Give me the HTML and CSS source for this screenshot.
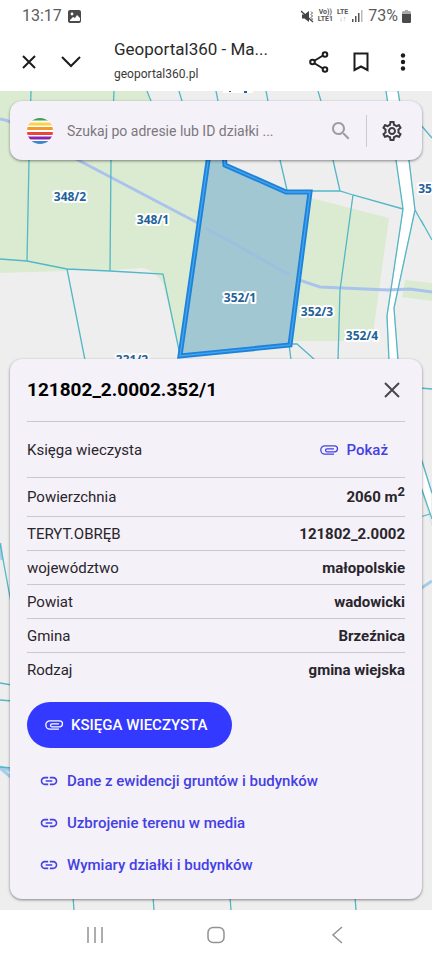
FILE: index.html
```html
<!DOCTYPE html>
<html lang="pl">
<head>
<meta charset="utf-8">
<meta name="viewport" content="width=device-width, initial-scale=1">
<title>Geoportal360 - Mapa</title>
<link rel="stylesheet" href="styles.css">
</head>
<body>
<svg class="sprite" aria-hidden="true">
  <symbol id="clip" viewBox="0 0 20 20"><path d="M15 14.200H6a4.200 4.200 0 0 1 0-8.400H15.500a3 3 0 0 1 0 6H8a1.400 1.400 0 0 1 0-2.900H15" fill="none" stroke="currentColor" stroke-width="1.300"/></symbol>
  <symbol id="link" viewBox="0 0 24 24"><path d="M3.900 12c0-1.710 1.390-3.100 3.100-3.100h4V7H7c-2.760 0-5 2.240-5 5s2.240 5 5 5h4v-1.900H7c-1.710 0-3.100-1.390-3.100-3.100zM8 13h8v-2H8v2zm9-6h-4v1.900h4c1.710 0 3.100 1.390 3.100 3.100s-1.390 3.100-3.100 3.100h-4V17h4c2.760 0 5-2.240 5-5s-2.240-5-5-5z"/></symbol>
</svg>

<div class="status">
  <div class="status-group">
    <span class="status-text">13:17</span>
    <svg width="13" height="13" viewBox="0 0 13 13"><rect width="13" height="13" rx="2" fill="#4a4a4a"/><path d="M2 10l3-3 2 1 2-3 3 3v2a1 1 0 0 1-1 1H2z" fill="#fff"/><circle cx="4" cy="4" r="1.4" fill="#fff"/></svg>
  </div>
  <div class="status-group status-right">
    <svg width="13" height="13" viewBox="0 0 13 13"><path d="M1 4.500h2.500L8 1v11L3.500 8.500H1z" fill="#444"/><path d="M0 1l12 11" stroke="#444" stroke-width="1.300"/><path d="M10 1.500l1.500 1.500-1.500 1.500 1.500 1.500-1.500 1.500 1.500 1.500-1.500 2" stroke="#555" fill="none"/></svg>
    <span class="net">Vo))<br>LTE1</span>
    <span class="net">LTE<br><i>↓↑</i></span>
    <svg width="12" height="12" viewBox="0 0 12 12" fill="#555"><path d="M0 9h1.500v3H0zM3 6h1.500v6H3zM6 3h1.500v9H6z"/><path d="M9 0h1.500v12H9z" fill="#bbb"/></svg>
    <span class="status-text">73%</span>
    <svg width="9" height="13" viewBox="0 0 9 13"><path d="M3 0h3v1h2l1 1v10l-1 1H1l-1-1V2l1-1h2z" fill="#aaa"/><path d="M0 4h9v8l-1 1H1l-1-1z" fill="#4a4a4a"/></svg>
  </div>
</div>

<header class="browser">
  <button class="icon-btn" aria-label="Zamknij kartę"><svg width="16" height="16" viewBox="0 0 16 16"><path d="M2 2l12 12M14 2L2 14"/></svg></button>
  <button class="icon-btn" aria-label="Zwiń"><svg width="20" height="12" viewBox="0 0 20 12"><path d="M1 1l9 9 9-9"/></svg></button>
  <div class="page-id">
    <div class="page-title">Geoportal360 - Ma...</div>
    <div class="page-url">geoportal360.pl</div>
  </div>
  <button class="icon-btn" aria-label="Udostępnij"><svg width="20" height="22" viewBox="0 0 20 22"><path d="M14 4.500L5 10M14 17.500L5 12"/><circle cx="3.500" cy="11" r="2.300"/><circle cx="16" cy="3.500" r="2.300"/><circle cx="16" cy="18.500" r="2.300"/></svg></button>
  <button class="icon-btn" aria-label="Zakładka"><svg width="16" height="20" viewBox="0 0 16 20"><path d="M1.500 1.500h13v16.500l-6.500-3.500-6.500 3.500z"/></svg></button>
  <button class="icon-btn" aria-label="Menu"><svg class="dots" width="6" height="18" viewBox="0 0 6 18"><circle cx="3" cy="2.500" r="2.200"/><circle cx="3" cy="9" r="2.200"/><circle cx="3" cy="15.500" r="2.200"/></svg></button>
</header>

<main class="map-view">
  <svg class="map" viewBox="0 91 432 819" preserveAspectRatio="xMidYMin slice" role="img" aria-label="Mapa działek">
    <g class="forest">
      <path d="M0 91H147L151 101 216 130V155L181 356 163 284Q155 270 143 268L110 270 67 269V271L0 273z"/>
      <path d="M311 198L389 218 372 341H290z"/>
      <path d="M405 280L432 283V301L402 297z"/>
    </g>
    <path class="road" d="M386 91H398L409 160 415 210 394 308 398 358V370H389L387 316 403 209z"/>
    <path class="road" d="M418 445L432 495V525L418 478z"/>
    <path class="river" d="M0 119Q8 120 16 125L78 160 196 222 290 277 320 287 388 290 410 289 432 292"/>
    <path class="stream" d="M0 767L12 771M0 768L12 778M420 589L432 581M0 543L2 560"/>
    <g class="border">
      <path d="M31 91L29 160 27 261M114 91L111 160 110 271M147 91L151 101M179 91L182 101M216 91L218 101M266 91L268 101M318 91L321 101"/>
      <path d="M0 259L27 261 67 269 110 271 163 274 180 355M67 269L85 360"/>
      <path d="M280 160L287 190M333 160L340 191M310 191H340L353 195 403 209M353 195L340 290 338 360M289 344H297L315 360M289 344L291 360"/>
      <path d="M386 91L396 160 403 209 387 316 389 360M398 91L409 160 415 210 394 308 398 360M415 210L424 226M421 220L432 240M420 124L432 138"/>
      <path d="M0 543L12 608M0 683L12 685M0 700L12 701M0 767L12 768M420 388L432 389M420 455L432 493M420 484L432 519M420 517L430 514"/>
      <path d="M73 897L74 910M153 897L154 910M230 897L231 910M355 897L356 910"/>
    </g>
    <path class="parcel" d="M211 140L180 356 290 345 310 192H286L225 165 223 140z"/>
    <path class="parcel-river" d="M206 228L290 275"/>
    <path class="parcel-core" d="M211 140L180 356 290 345 310 192H286L225 165 223 140z"/>
    <path d="M223 91h30v2h-30z" fill="#fff"/><path d="M229 91h2v1h-2zM244 91h3v2h-3z" fill="#1f6299"/>
    <g class="label">
      <text x="70" y="201">348/2</text>
      <text x="153" y="224">348/1</text>
      <text x="240" y="302">352/1</text>
      <text x="317" y="316">352/3</text>
      <text x="362" y="340">352/4</text>
      <text x="132" y="364">331/2</text>
      <text x="425" y="193">35</text>
    </g>
  </svg>

  <form class="search card">
    <svg width="26" height="26" viewBox="0 0 26 26" aria-hidden="true">
      <clipPath id="disc"><circle cx="13" cy="13" r="13"/></clipPath>
      <g clip-path="url(#disc)"><path fill="#fff" d="M0 0h26v26H0z"/><path fill="#3f9f4a" d="M0 0h26v2.500H0z"/><path fill="#fbd24a" d="M0 4.500h26v3H0z"/><path fill="#f39a2d" d="M0 9h26v3H0z"/><path fill="#e8473f" d="M0 14h26v3H0z"/><path fill="#8e24aa" d="M0 18.500h26v3H0z"/><path fill="#3d87cf" d="M0 23h26v3H0z"/></g>
    </svg>
    <input type="text" aria-label="Szukaj" placeholder="Szukaj po adresie lub ID działki ...">
    <button class="icon-btn muted" type="button" aria-label="Szukaj"><svg width="24" height="24" viewBox="0 0 24 24"><path d="M15.500 14h-.79l-.28-.27C15.410 12.590 16 11.110 16 9.500 16 5.910 13.090 3 9.500 3S3 5.910 3 9.500 5.910 16 9.500 16c1.610 0 3.090-.59 4.230-1.570l.27.28v.79l5 4.990L20.490 19l-4.990-5zm-6 0C7.010 14 5 11.990 5 9.500S7.010 5 9.500 5 14 7.010 14 9.500 11.990 14 9.500 14z"/></svg></button>
    <span class="divider"></span>
    <button class="icon-btn gear" type="button" aria-label="Ustawienia"><svg width="24" height="24" viewBox="0 0 24 24"><path d="M19.43 12.98c.04-.32.07-.64.07-.98 0-.34-.03-.66-.07-.98l2.11-1.65c.19-.15.24-.42.12-.64l-2-3.46c-.09-.16-.26-.25-.44-.25-.06 0-.12.01-.17.03l-2.49 1c-.52-.4-1.08-.73-1.69-.98l-.38-2.65C14.46 2.18 14.25 2 14 2h-4c-.25 0-.46.18-.49.42l-.38 2.65c-.61.25-1.17.59-1.69.98l-2.49-1c-.06-.02-.12-.03-.18-.03-.17 0-.34.09-.43.25l-2 3.46c-.13.22-.07.49.12.64l2.11 1.65c-.04.32-.07.65-.07.98 0 .33.03.66.07.98l-2.11 1.65c-.19.15-.24.42-.12.64l2 3.46c.09.16.26.25.44.25.06 0 .12-.01.17-.03l2.49-1c.52.4 1.08.73 1.69.98l.38 2.65c.03.24.24.42.49.42h4c.25 0 .46-.18.49-.42l.38-2.65c.61-.25 1.17-.59 1.69-.98l2.49 1c.06.02.12.03.18.03.17 0 .34-.09.43-.25l2-3.46c.12-.22.07-.49-.12-.64l-2.11-1.65zm-1.98-1.71c.04.31.05.52.05.73 0 .21-.02.43-.05.73l-.14 1.13.89.7 1.08.84-.7 1.21-1.27-.51-1.04-.42-.9.68c-.43.32-.84.56-1.25.73l-1.06.43-.16 1.13-.2 1.35h-1.4l-.19-1.35-.16-1.13-1.06-.43c-.43-.18-.83-.41-1.23-.71l-.91-.7-1.06.43-1.27.51-.7-1.21 1.08-.84.89-.7-.14-1.13c-.03-.31-.05-.54-.05-.74s.02-.43.05-.73l.14-1.13-.89-.7-1.08-.84.7-1.21 1.27.51 1.04.42.9-.68c.43-.32.84-.56 1.25-.73l1.06-.43.16-1.13.2-1.35h1.39l.19 1.35.16 1.13 1.06.43c.43.18.83.41 1.23.71l.91.7 1.06-.43 1.27-.51.7 1.21-1.07.85-.89.7.14 1.13zM12 8c-2.21 0-4 1.79-4 4s1.79 4 4 4 4-1.79 4-4-1.79-4-4-4zm0 6c-1.1 0-2-.9-2-2s.9-2 2-2 2 .9 2 2-.9 2-2 2z"/></svg></button>
  </form>

  <section class="details card">
    <div class="details-head">
      <h1>121802_2.0002.352/1</h1>
      <button class="icon-btn close" aria-label="Zamknij"><svg width="16" height="16" viewBox="0 0 16 16"><path d="M1 1l14 14M15 1L1 15"/></svg></button>
    </div>
    <table>
      <tbody>
        <tr class="tall"><th scope="row">Księga wieczysta</th><td><button class="show"><svg width="20" height="20"><use href="#clip"/></svg>Pokaż</button></td></tr>
        <tr class="medium"><th scope="row">Powierzchnia</th><td>2060 m<sup>2</sup></td></tr>
        <tr><th scope="row">TERYT.OBRĘB</th><td>121802_2.0002</td></tr>
        <tr><th scope="row">województwo</th><td>małopolskie</td></tr>
        <tr><th scope="row">Powiat</th><td>wadowicki</td></tr>
        <tr><th scope="row">Gmina</th><td>Brzeźnica</td></tr>
        <tr><th scope="row">Rodzaj</th><td>gmina wiejska</td></tr>
      </tbody>
    </table>
    <button class="primary"><svg width="20" height="20"><use href="#clip"/></svg>KSIĘGA WIECZYSTA</button>
    <nav class="links">
      <a href="#"><svg width="20" height="20"><use href="#link"/></svg>Dane z ewidencji gruntów i budynków</a>
      <a href="#"><svg width="20" height="20"><use href="#link"/></svg>Uzbrojenie terenu w media</a>
      <a href="#"><svg width="20" height="20"><use href="#link"/></svg>Wymiary działki i budynków</a>
    </nav>
  </section>
</main>

<nav class="system" aria-label="Nawigacja systemowa">
  <button class="icon-btn" aria-label="Ostatnie"><svg width="18" height="18" viewBox="0 0 18 18"><path d="M2 1v16M9 1v16M16 1v16"/></svg></button>
  <button class="icon-btn" aria-label="Ekran główny"><svg width="18" height="18" viewBox="0 0 18 18"><rect x="1" y="1.500" width="16" height="15" rx="5"/></svg></button>
  <button class="icon-btn" aria-label="Wstecz"><svg width="18" height="18" viewBox="0 0 18 18"><path d="M14 1L5 9l9 8"/></svg></button>
</nav>
</body>
</html>
```
FILE: styles.css
```css
* { box-sizing: border-box; }

body {
  margin: 0;
  min-height: 100vh;
  display: flex;
  flex-direction: column;
  background: #fff;
  color: #29252c;
  font-family: Roboto, "Liberation Sans", sans-serif;
  font-size: 15px;
  line-height: 20px;
}

button {
  font: inherit;
  border: 0;
  background: none;
  padding: 0;
  color: inherit;
}

.sprite { position: absolute; width: 0; height: 0; }

svg { flex: none; display: block; }

.icon-btn {
  flex: none;
  display: grid;
  place-items: center;
  width: 42px;
  height: 42px;
}

/* Status bar */
.status {
  display: flex;
  justify-content: space-between;
  align-items: center;
  height: 32px;
  padding: 0 21px 0 22px;
}

.status-group { display: flex; align-items: center; gap: 6px; }
.status-right { gap: 4px; }
.status-text { font-size: 16px; color: #5c5c5c; }
.net { font-size: 7px; line-height: 7px; font-weight: 700; color: #555; text-align: center; }
.net i { color: #aaa; font-style: normal; }

/* Browser toolbar */
.browser {
  display: flex;
  align-items: center;
  height: 59px;
  padding: 0 8px;
}

.browser svg { fill: none; stroke: #1c1c1c; stroke-width: 2; }
.browser .dots { fill: #1c1c1c; stroke: none; }
.page-id { flex: 1; min-width: 0; padding-left: 22px; white-space: nowrap; }
.page-title { font-size: 17px; line-height: 24px; color: #2a2a2a; }
.page-url { font-size: 12px; line-height: 26px; color: #3a3a3a; }

/* Map */
.map-view {
  position: relative;
  flex: 1;
  display: flex;
  flex-direction: column;
  justify-content: space-between;
  gap: 199px;
  padding: 10px 10px 11px;
  background: #eee;
}

.map { position: absolute; inset: 0; width: 100%; height: 100%; }
.forest { fill: #dbebd2; }
.road { fill: #fff; stroke: #ddd; }
.river { fill: none; stroke: #a9c3ec; stroke-width: 3; }
.stream { fill: none; stroke: #a5cdea; stroke-width: 3; }
.border { fill: none; stroke: #53b7c6; stroke-width: 1.3; }
.parcel { fill: #a1c7d3; stroke: #1d82dc; stroke-width: 5; }
.parcel-river { stroke: #9cc0de; stroke-width: 3; }
.parcel-core { fill: none; stroke: #45a6ea; stroke-width: 1.3; }

.label {
  font: 700 12px "Noto Sans", sans-serif;
  fill: #1f6299;
  stroke: #fff;
  stroke-width: 4;
  stroke-linejoin: round;
  paint-order: stroke;
  text-anchor: middle;
}

.card {
  position: relative;
  background: #f5f1f8;
  border-radius: 12px;
  box-shadow: 0 1px 3px rgba(0, 0, 0, 0.45);
}

/* Search */
.search {
  display: flex;
  align-items: center;
  height: 59px;
  padding: 0 9px 0 17px;
}

.search input {
  flex: 1;
  min-width: 0;
  margin-left: 14px;
  padding: 0;
  border: 0;
  background: none;
  font: inherit;
  font-size: 14px;
  color: #29252c;
}

.search input::placeholder { color: #7b787e; opacity: 1; }
.divider { width: 1px; height: 32px; margin: 0 4px; background: #cdc9d0; }
.muted { fill: #9f9ca2; }
.gear { fill: #3f3c43; }

/* Parcel details */
.details { padding: 0 17px 13px; }

.details-head {
  display: flex;
  align-items: center;
  justify-content: space-between;
  height: 62px;
}

h1 { margin: 0; font-size: 19px; line-height: 24px; font-weight: 700; color: #000; }
.close { margin-right: -8px; }
.close svg { fill: none; stroke: #4a474e; stroke-width: 2; }

table { width: 100%; border-collapse: separate; border-spacing: 0; }
tr { height: 34px; }
.tall { height: 56px; }
.medium { height: 39px; }
th, td { padding: 0; border-top: 1px solid #cbc7ce; vertical-align: middle; }
th { text-align: left; font-weight: 400; }
td { text-align: right; font-weight: 700; }
sup { font-size: 13px; line-height: 0; }

.show {
  display: inline-flex;
  align-items: center;
  gap: 8px;
  padding-right: 17px;
  font-weight: 500;
  color: #4340e4;
  vertical-align: middle;
}

.primary {
  display: flex;
  align-items: center;
  gap: 7px;
  height: 46px;
  margin-top: 16px;
  padding: 0 25px 0 17px;
  border-radius: 23px;
  background: #3339ff;
  color: #fff;
  font-weight: 500;
}

.links { display: flex; flex-direction: column; align-items: flex-start; margin-top: 12px; }

.links a {
  display: flex;
  align-items: center;
  gap: 8px;
  height: 42px;
  padding-left: 12px;
  color: #4340e4;
  fill: #4340e4;
  font-weight: 500;
  text-decoration: none;
}

/* System navigation */
.system {
  display: flex;
  justify-content: center;
  gap: 79px;
  height: 50px;
  align-items: center;
}

.system svg { fill: none; stroke: #929292; stroke-width: 1.5; }
```
